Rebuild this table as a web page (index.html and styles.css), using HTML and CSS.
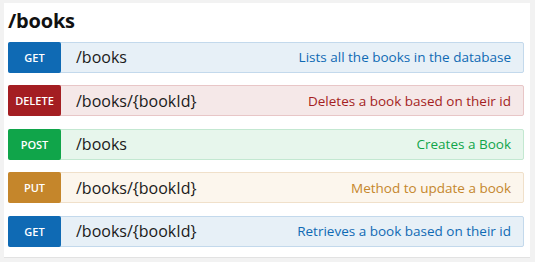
FILE: index.html
```html
<!DOCTYPE html>
<html lang="en">
<head>
  <meta charset="UTF-8">
  <title>/books</title>
  <link rel="stylesheet" href="styles.css">
</head>
<body>
  <div class="panel">
    <h2 class="title">/books</h2>

    <div class="op get">
      <span class="method">GET</span>
      <span class="path">/books</span>
      <span class="desc">Lists all the books in the database</span>
    </div>
    <div class="op delete">
      <span class="method">DELETE</span>
      <span class="path">/books/{bookId}</span>
      <span class="desc">Deletes a book based on their id</span>
    </div>
    <div class="op post">
      <span class="method">POST</span>
      <span class="path">/books</span>
      <span class="desc">Creates a Book</span>
    </div>
    <div class="op put">
      <span class="method">PUT</span>
      <span class="path">/books/{bookId}</span>
      <span class="desc">Method to update a book</span>
    </div>
    <div class="op get">
      <span class="method">GET</span>
      <span class="path">/books/{bookId}</span>
      <span class="desc">Retrieves a book based on their id</span>
    </div>
  </div>
</body>
</html>
```

FILE: styles.css
```css
body { margin: 0; background-color: #f2f2f2; font-family: "Open Sans", "Noto Sans", sans-serif; }
.panel { margin: 3px 5px 0 4px; background-color: #fff; padding: 5px 6px 10px 4px; border-bottom: 1px solid #e2e2e2; display: flex; flex-direction: column; gap: 12.5px; }
.title { margin: 0 0 -5px 0; font-size: 20px; line-height: 26px; font-weight: 700; color: #111; letter-spacing: -0.2px; }
.op { display: flex; align-items: center; height: 31px; box-sizing: border-box; border: 1px solid; border-radius: 2px; }
.method { align-self: stretch; margin: -1px 0 -1px -1px; width: 53px; border-radius: 2px; color: #fff; font-size: 11px; font-weight: 600; display: flex; align-items: center; justify-content: center; }
.path { padding-left: 15px; font-size: 16px; color: #1a1a1a; }
.desc { margin-left: auto; padding-right: 12px; font-size: 13.5px; }

.get { background-color: #e7f0f7; border-color: #c3d9ec; }
.get .method { background-color: #0f6ab4; }
.get .desc { color: #0f6ab4; }

.delete { background-color: #f5e8e8; border-color: #e8c6c7; }
.delete .method { background-color: #a41e22; }
.delete .desc { color: #a41e22; }

.post { background-color: #e7f6ec; border-color: #c3e8d1; }
.post .method { background-color: #10a54a; }
.post .desc { color: #10a54a; }

.put { background-color: #fcf6ed; border-color: #f0e0ca; }
.put .method { background-color: #c5862b; }
.put .desc { color: #c5862b; }
```
